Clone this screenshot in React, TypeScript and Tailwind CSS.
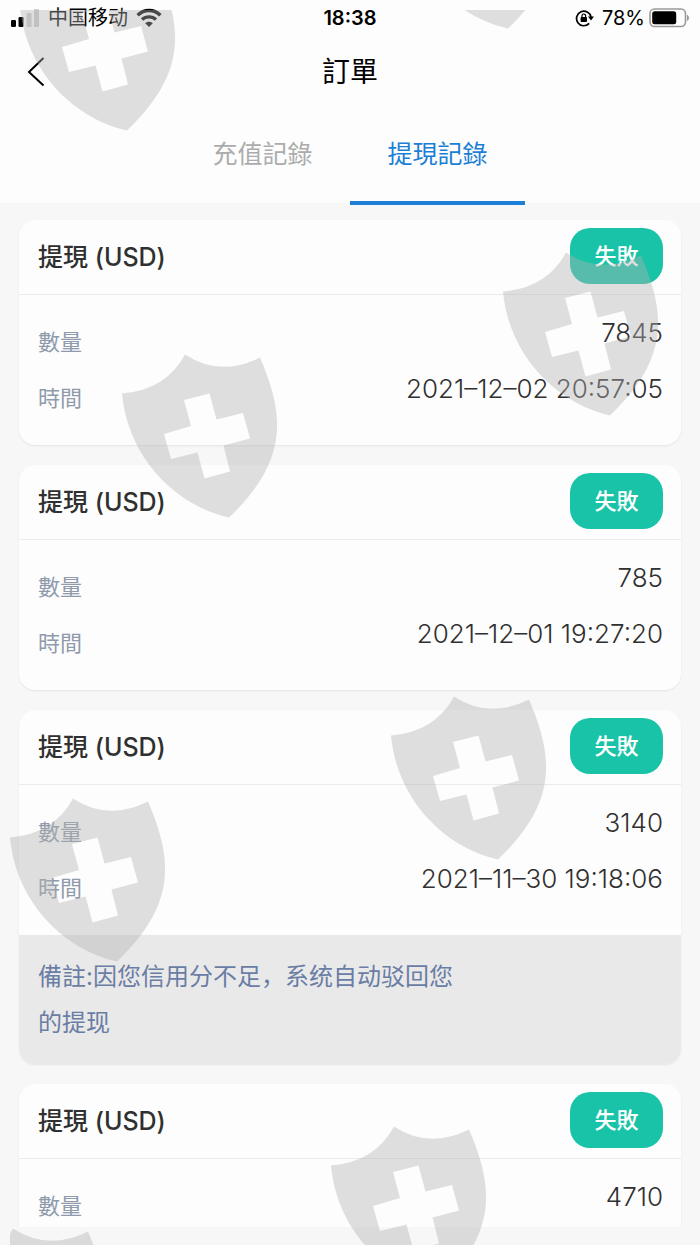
type RecordItem = {
  id: number;
  amount: string;
  time?: string;
  note?: string;
};

const records: RecordItem[] = [
  { id: 1, amount: "7845", time: "2021–12–02 20:57:05" },
  { id: 2, amount: "785", time: "2021–12–01 19:27:20" },
  {
    id: 3,
    amount: "3140",
    time: "2021–11–30 19:18:06",
    note: "備註:因您信用分不足，系统自动驳回您的提现",
  },
  { id: 4, amount: "4710" },
];

// free positions of the shield marks, measured inside the overlay
const marks = [
  { x: 10, y: -43 },
  { x: 391, y: -145 },
  { x: 493, y: 242 },
  { x: 112, y: 344 },
  { x: 381, y: 686 },
  { x: 0, y: 788 },
  { x: 321, y: 1116 },
  { x: -60, y: 1218 },
];

function Shield({ x, y }: { x: number; y: number }) {
  return (
    <svg
      className="absolute"
      style={{ left: x, top: y }}
      width="156"
      height="164"
      viewBox="0 0 156 164"
      fill="#b2b2b2"
      fillOpacity="0.41"
      fillRule="evenodd"
    >
      <path d="M0 39.5Q44 36 63 .5Q98 23.5 138 3.5C162 60 168 105 107 163.5C55 152 6 105 0 39.5ZM62 46L69 72L42 80L49 105L75.5 98.5L82.5 124.5L108 117.5L101.5 91.5L128 84.5L121 59L94.5 65.5L87.5 39.5Z" />
    </svg>
  );
}

function SignalIcon() {
  return (
    <svg width="30" height="20" viewBox="0 0 30 20">
      <rect x="1" y="12" width="5" height="7" rx="1.2" fill="#000" />
      <rect x="8.5" y="9" width="5" height="10" rx="1.2" fill="#000" />
      <rect x="16.5" y="5" width="5" height="14" rx="1.2" fill="#ccc" />
      <rect x="24" y="1" width="5" height="18" rx="1.2" fill="#ccc" />
    </svg>
  );
}

function WifiIcon() {
  return (
    <svg width="26" height="20" viewBox="0 0 26 20" fill="none" stroke="#000" strokeWidth="3.4">
      <path d="M1.6 7.2C8 .9 18 .9 24.4 7.2" />
      <path d="M6 11.6C10 7.9 16 7.9 20 11.6" />
      <path d="M13 19L9.2 15.2C11.3 13.2 14.7 13.2 16.8 15.2Z" fill="#000" stroke="none" />
    </svg>
  );
}

function RotationLockIcon() {
  return (
    <svg width="19" height="18" viewBox="0 0 19 18" fill="none" stroke="#000" strokeWidth="1.7">
      <path d="M14.2 14.4A7.3 7.3 0 1 1 16 8" />
      <path d="M13 7.6H19L16 11.4Z" fill="#000" stroke="none" />
      <rect x="5.6" y="8" width="6.4" height="5" rx=".8" fill="#000" stroke="none" />
      <path d="M7 8.4V6.8A1.8 1.8 0 0 1 10.6 6.8V8.4" strokeWidth="1.2" />
    </svg>
  );
}

function BatteryIcon() {
  return (
    <svg width="41" height="20" viewBox="0 0 41 20">
      <rect x="1" y="1" width="35.5" height="17.5" rx="4.5" fill="none" stroke="#999" strokeWidth="1.6" />
      <rect x="3.2" y="3.2" width="24" height="13" rx="2.5" fill="#000" />
      <path d="M38 6.8C40.6 7.8 40.6 12 38 13Z" fill="#999" />
    </svg>
  );
}

function StatusBar() {
  return (
    <div className="grid h-9 grid-cols-3 items-center px-2.5 text-xl text-black">
      <div className="flex items-center gap-2">
        <SignalIcon />
        <span>中国移动</span>
        <WifiIcon />
      </div>
      <span className="text-center font-semibold">18:38</span>
      <div className="flex items-center justify-end">
        <RotationLockIcon />
        <span className="mr-1 ml-2">78%</span>
        <BatteryIcon />
      </div>
    </div>
  );
}

function RecordRow({ label, value }: { label: string; value: string }) {
  return (
    <div className="flex h-14 justify-between">
      <dt className="pt-[19px] text-[22px] leading-9 text-[#8f9bac]">{label}</dt>
      <dd className="text-[26px] leading-14 font-light text-[#303030]">{value}</dd>
    </div>
  );
}

function RecordCard({ record }: { record: RecordItem }) {
  return (
    <article className="shrink-0 overflow-hidden rounded-2xl bg-[#fdfdfd] shadow-[0_1px_2px_rgba(0,0,0,0.08)]">
      <div className="flex h-[75px] items-center justify-between border-b border-[#ebebeb] pr-[18px] pl-[19px]">
        <h2 className="pt-0.5 text-[25px] font-medium text-[#303030]">提現 (USD)</h2>
        <span className="mb-0.5 flex h-14 w-[93px] items-center justify-center rounded-[20px] bg-[#19c3a7] text-[22px] font-medium text-white">
          失敗
        </span>
      </div>
      <dl className="pt-2.5 pr-[18px] pb-7 pl-[19px]">
        <RecordRow label="數量" value={record.amount} />
        {record.time && <RecordRow label="時間" value={record.time} />}
      </dl>
      {record.note && (
        <div lang="zh-Hans" className="bg-[#e9e9e9] px-[19px] pt-[19px] pb-[18px]">
          <p className="max-w-[424px] text-2xl leading-[46px] text-[#6a7da5]">{record.note}</p>
        </div>
      )}
    </article>
  );
}

export default function App() {
  return (
    <div
      lang="zh-Hant"
      className="relative flex h-screen flex-col overflow-hidden bg-[#f7f7f7] font-['Inter','Noto_Sans_CJK_SC',sans-serif]"
    >
      <header className="shrink-0 bg-[#fdfdfd]">
        <StatusBar />
        <div className="grid h-[70px] grid-cols-3 items-center px-6">
          <button type="button" aria-label="返回" className="w-fit">
            <svg width="24" height="32" viewBox="0 0 24 32" fill="none" stroke="#000" strokeWidth="2">
              <path d="M19.5 3L5 17L19.5 30.5" />
            </svg>
          </button>
          <h1 className="pt-0.5 text-center text-[28px] text-black">訂單</h1>
        </div>
        <nav className="flex h-[97px] justify-center text-[25px]">
          <button type="button" className="h-[99px] w-1/4 border-b-4 border-transparent pt-0.5 text-[#acacac]">
            充值記錄
          </button>
          <button type="button" className="h-[99px] w-1/4 border-b-4 border-[#1b7fd6] pt-0.5 text-[#1b7fd6]">
            提現記錄
          </button>
        </nav>
      </header>

      <main className="mb-[18px] flex min-h-0 flex-1 flex-col gap-5 overflow-hidden px-[19px] pt-[17px]">
        {records.map((record) => (
          <RecordCard key={record.id} record={record} />
        ))}
      </main>

      <div aria-hidden="true" className="pointer-events-none absolute inset-0 top-2.5 left-2.5 overflow-hidden">
        {marks.map((mark) => (
          <Shield key={`${mark.x}-${mark.y}`} x={mark.x} y={mark.y} />
        ))}
      </div>
    </div>
  );
}
